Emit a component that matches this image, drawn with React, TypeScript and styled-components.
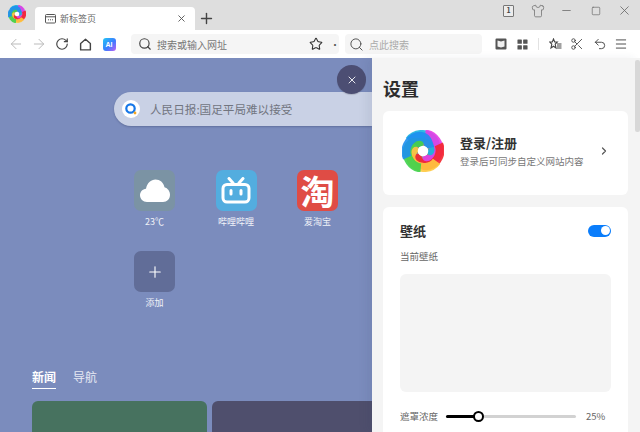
import React from "react";
import styled, { createGlobalStyle } from "styled-components";
import {
  ArrowLeft,
  ArrowRight,
  ChevronRight,
  Menu,
  Minus,
  Plus,
  RotateCw,
  Scissors,
  Search,
  Shirt,
  Square,
  Star,
  Undo2,
  X,
} from "lucide-react";

const GlobalStyle = createGlobalStyle`
  html, body {
    margin: 0;
    padding: 0;
    width: 640px;
    height: 432px;
    overflow: hidden;
    font-family: "Noto Sans CJK SC", "Liberation Sans", sans-serif;
  }
  * {
    box-sizing: border-box;
  }
`;

const Window = styled.div`
  width: 640px;
  height: 432px;
  display: flex;
  flex-direction: column;
  overflow: hidden;
`;

const TitleBar = styled.div`
  height: 30px;
  flex: none;
  display: flex;
  align-items: flex-end;
  background: #dedede;
  padding-left: 7px;
`;

const LogoSlot = styled.div`
  width: 28px;
  height: 30px;
  display: flex;
  align-items: center;
  padding: 0 0 2px 1px;
`;

const Tab = styled.div`
  width: 160px;
  height: 23px;
  display: flex;
  align-items: center;
  padding: 0 8px 0 10px;
  background: #fff;
  border-radius: 4px 4px 0 0;
  font-size: 9px;
  color: #666;
`;

const TabTitle = styled.span`
  flex: 1;
  margin-left: 4px;
`;

const NewTab = styled.div`
  width: 23px;
  height: 23px;
  display: flex;
  align-items: center;
  justify-content: center;
  color: #444;
`;

const WindowControls = styled.div`
  margin-left: auto;
  height: 30px;
  display: flex;
  align-items: flex-start;
  padding-right: 1px;
`;

const WindowButton = styled.div`
  width: 29px;
  height: 21px;
  display: flex;
  align-items: center;
  justify-content: center;
  color: #666;
`;

const CountBadge = styled.div`
  width: 11px;
  height: 12px;
  border: 1px solid #777;
  border-radius: 1px;
  background: #ececec;
  display: flex;
  align-items: center;
  justify-content: center;
  font-size: 7px;
  font-weight: 700;
  color: #444;
  line-height: 1;
`;

const Toolbar = styled.div`
  height: 28px;
  flex: none;
  display: flex;
  align-items: center;
  padding: 0 7px 0 4px;
  background: #fff;
`;

const ToolSlot = styled.div<{ $width?: number; $color?: string }>`
  width: ${(p) => p.$width ?? 23}px;
  height: 22px;
  flex: none;
  display: flex;
  align-items: center;
  justify-content: center;
  color: ${(p) => p.$color ?? "#555"};
`;

const Field = styled.div<{ $width: number; $inset: number }>`
  width: ${(p) => p.$width}px;
  height: 20px;
  flex: none;
  display: flex;
  align-items: center;
  padding-left: ${(p) => p.$inset}px;
  border-radius: 4px;
  background: #f5f5f5;
  font-size: 10px;
  color: #777;
`;

const AddressField = styled(Field)`
  margin-left: 10px;
`;

const EngineField = styled(Field)`
  margin-left: 6px;
  margin-right: 7px;
`;

const FieldText = styled.span<{ $muted?: boolean }>`
  flex: 1;
  margin-left: 5px;
  color: ${(p) => (p.$muted ? "#aaa" : "#777")};
`;

const AiBadge = styled.div`
  width: 13px;
  height: 13px;
  border-radius: 3px;
  background: linear-gradient(135deg, #22c7f5, #3b7cff 55%, #c060f5);
  color: #fff;
  font-size: 7px;
  font-weight: 700;
  line-height: 13px;
  text-align: center;
  font-family: "Liberation Sans", sans-serif;
`;

const Divider = styled.div`
  width: 1px;
  height: 12px;
  flex: none;
  margin: 0 5px;
  background: #e2e2e2;
`;

const Content = styled.div`
  flex: 1;
  min-height: 0;
  display: flex;
`;

const Main = styled.div`
  position: relative;
  flex: 1;
  min-width: 0;
  overflow: hidden;
  display: flex;
  flex-direction: column;
  background: #7b8cbd;
`;

const CloseButton = styled.div`
  position: absolute;
  top: 7px;
  right: 6px;
  width: 29px;
  height: 29px;
  border-radius: 50%;
  background: #4c4e73;
  color: #e8e8ee;
  display: flex;
  align-items: center;
  justify-content: center;
  box-shadow: 0 1px 1px rgba(0, 0, 0, 0.15);
`;

const Pill = styled.div`
  height: 34px;
  margin: 34px 0 0 114px;
  display: flex;
  align-items: center;
  padding-left: 8px;
  border-radius: 17px 0 0 17px;
  background: #c9d1e5;
  font-size: 11.6px;
  color: #71757f;
  box-shadow: 0 1px 2px rgba(50, 60, 100, 0.35);
`;

const PillText = styled.span`
  margin-left: 10px;
`;

const TileGrid = styled.div`
  margin: 44px 0 0 134px;
  display: grid;
  grid-template-columns: repeat(3, 41px);
  grid-auto-rows: 41px;
  column-gap: 40.5px;
  row-gap: 40px;
`;

const TileItem = styled.div`
  display: flex;
  flex-direction: column;
  align-items: center;
  height: 41px;
`;

const Tile = styled.div<{ $bg: string }>`
  width: 41px;
  height: 41px;
  flex: none;
  border-radius: 7px;
  background: ${(p) => p.$bg};
  display: flex;
  align-items: center;
  justify-content: center;
  color: #fff;
`;

const TileGlyph = styled.span`
  font-size: 34px;
  font-weight: 700;
  line-height: 1;
  color: #fff;
`;

const TileLabel = styled.div`
  margin-top: 4px;
  font-size: 9px;
  line-height: 13px;
  white-space: nowrap;
  color: #f0f2f8;
`;

const NewsTabs = styled.div`
  margin: 76px 0 0 32px;
  display: flex;
  gap: 17px;
`;

const NewsTab = styled.div<{ $active?: boolean }>`
  height: 21px;
  font-size: 12px;
  line-height: 18px;
  font-weight: ${(p) => (p.$active ? 700 : 400)};
  color: ${(p) => (p.$active ? "#fff" : "#e6e9f3")};
  border-bottom: ${(p) => (p.$active ? "1px solid #fff" : "none")};
`;

const NewsCards = styled.div`
  margin: 12px 0 0 32px;
  display: flex;
  gap: 5px;
  flex: 1;
`;

const NewsCard = styled.div<{ $bg: string; $width: number }>`
  width: ${(p) => p.$width}px;
  flex: none;
  border-radius: 6px 6px 0 0;
  background: ${(p) => p.$bg};
`;

const Settings = styled.aside`
  position: relative;
  width: 268px;
  flex: none;
  padding: 0 12px 0 11px;
  background: #f4f4f4;
  box-shadow: -6px 0 8px rgba(40, 50, 90, 0.07);
`;

const ScrollThumb = styled.div`
  position: absolute;
  top: 2px;
  right: 0;
  width: 5px;
  height: 72px;
  border-radius: 2px;
  background: #d8d8d8;
`;

const SettingsTitle = styled.h1`
  margin: 17px 0 10px;
  font-size: 18px;
  line-height: 26px;
  font-weight: 700;
  color: #2d2d2d;
`;

const Card = styled.section`
  background: #fff;
  border-radius: 6px;
`;

const AccountCard = styled(Card)`
  height: 84px;
  display: flex;
  align-items: center;
  padding: 0 18px 4px 19px;
  margin-bottom: 12px;
`;

const AccountText = styled.div`
  flex: 1;
  margin-left: 16px;
`;

const AccountName = styled.div`
  font-size: 13px;
  line-height: 18px;
  font-weight: 700;
  color: #333;
`;

const AccountHint = styled.div`
  margin-top: 2px;
  font-size: 9.5px;
  line-height: 14px;
  color: #777;
`;

const WallpaperCard = styled(Card)`
  height: 240px;
  padding: 13px 17px;
`;

const CardHeader = styled.div`
  display: flex;
  align-items: center;
  justify-content: space-between;
  height: 20px;
`;

const CardTitle = styled.div`
  font-size: 13px;
  font-weight: 700;
  color: #333;
`;

const Toggle = styled.div`
  width: 23px;
  height: 12px;
  margin-top: 1px;
  border-radius: 6px;
  background: #0a7dfb;
  display: flex;
  justify-content: flex-end;
  align-items: center;
  padding-right: 1.5px;
`;

const ToggleKnob = styled.div`
  width: 9px;
  height: 9px;
  border-radius: 50%;
  background: #fff;
`;

const SmallLabel = styled.div`
  font-size: 9.5px;
  line-height: 14px;
  color: #666;
  white-space: nowrap;
`;

const CurrentLabel = styled(SmallLabel)`
  margin-top: 9px;
`;

const Preview = styled.div`
  height: 118px;
  margin-top: 11px;
  border-radius: 6px;
  background: #f4f4f4;
`;

const SliderRow = styled.div`
  margin-top: 17px;
  display: flex;
  align-items: center;
`;

const SliderTrack = styled.div`
  position: relative;
  width: 130px;
  height: 3px;
  margin: 0 10px 0 8px;
  border-radius: 2px;
  background: #d2d2d2;
`;

const SliderFill = styled.div`
  height: 3px;
  border-radius: 2px;
  background: #000;
`;

const SliderThumb = styled.div`
  position: absolute;
  top: -4px;
  width: 11px;
  height: 11px;
  margin-left: -5.5px;
  border: 2px solid #000;
  border-radius: 50%;
  background: #fff;
`;

const bands = ["#19b4e0", "#e63ce6", "#f3262c", "#ffc93f", "#3ed24c", "#1e8ff0"];

const SwirlLogo: React.FC<{ size: number }> = ({ size }) => (
  <svg width={size} height={size} viewBox="0 0 40 40" fill="none">
    <circle cx="20" cy="20" r="9" stroke="#8f8f8f" strokeWidth="8" />
    {bands.map((color, i) => (
      <path
        key={color}
        d="M9 8C15 2 26 3 31 10C34 15 33 20 25 25"
        stroke={color}
        strokeWidth="8.500"
        opacity={0.9}
        transform={`rotate(${i * 60 - 10} 20 20)`}
      />
    ))}
    <circle cx="20" cy="20" r="5" fill="#fff" />
  </svg>
);

const CloudIcon = () => (
  <svg width="30" height="23" viewBox="0 0 30 23" fill="#fff">
    <path d="M7 23C3 23 0 20 0 16.300C0 12.800 2.600 10 6 9.700C7 4.200 11 0.500 15.500 0.500C20 0.500 23.500 3.600 24.500 8.200C27.800 9.200 30 12.300 30 15.800C30 20 27 23 23 23Z" />
  </svg>
);

const BilibiliIcon = () => (
  <svg width="30" height="27" viewBox="0 0 30 27" fill="none" stroke="#fff">
    <rect x="2" y="7.500" width="26" height="17.500" rx="4" strokeWidth="3" />
    <path d="M8 1.500L12 6M22 1.500L18 6" strokeWidth="3" strokeLinecap="round" />
    <path d="M10 13.500V17M20 13.500V17" strokeWidth="3" strokeLinecap="round" />
  </svg>
);

const TabPageIcon = () => (
  <svg width="11" height="11" viewBox="0 0 11 11" fill="none" stroke="#555">
    <rect x="0.500" y="1.500" width="10" height="8.500" rx="1" />
    <path d="M0.500 3.800H10.500" />
    <path d="M3 6.800H4M5 6.800H6M7 6.800H8" />
  </svg>
);

const HomeIcon = () => (
  <svg width="13" height="13" viewBox="0 0 12 12" fill="none" stroke="#444" strokeWidth="1.300">
    <path d="M1.500 11V5L6 1.200L10.500 5V11Z" strokeLinejoin="round" />
  </svg>
);

const BookIcon = () => (
  <svg width="12" height="12" viewBox="0 0 12 12" fill="#555">
    <path d="M1.500 0.500H10.500A1 1 0 0 1 11.500 1.500V10.500A1 1 0 0 1 10.500 11.500H1.500A1 1 0 0 1 0.500 10.500V1.500A1 1 0 0 1 1.500 0.500Z" />
    <path d="M2.500 2.500L6 3.500L9.500 2.500V8.500L6 9.500L2.500 8.500Z" fill="#f0f0f0" />
  </svg>
);

const GridIcon = () => (
  <svg width="11" height="11" viewBox="0 0 12 12" fill="#555">
    <rect x="0.500" y="0.500" width="4.800" height="4.800" rx="0.600" />
    <rect x="6.700" y="0.500" width="4.800" height="4.800" rx="0.600" />
    <rect x="0.500" y="6.700" width="4.800" height="4.800" rx="0.600" />
    <rect x="6.700" y="6.700" width="4.800" height="4.800" rx="0.600" />
  </svg>
);

const FavListIcon = () => (
  <svg width="13" height="12" viewBox="0 0 13 12" fill="none" stroke="#444" strokeWidth="1.100">
    <path d="M4.500 1L5.700 4H8.300L6.200 6.200L7 10L4.500 8.200L2 10L2.800 6.200L0.700 4H3.300Z" />
    <path d="M8 6H12.500M8 8H12.500M8 10H12.500" />
  </svg>
);

const SearchRingIcon = () => (
  <svg width="18" height="18" viewBox="0 0 18 18">
    <circle cx="9" cy="9" r="9" fill="#fff" />
    <circle cx="8.500" cy="8.500" r="4.200" fill="none" stroke="#1677e8" strokeWidth="2.200" />
    <circle cx="13" cy="13" r="1.400" fill="#f5a623" />
  </svg>
);

const App: React.FC = () => {
  const opacity = 25;

  return (
    <Window>
      <GlobalStyle />
      <TitleBar>
        <LogoSlot>
          <SwirlLogo size={18} />
        </LogoSlot>
        <Tab>
          <TabPageIcon />
          <TabTitle>新标签页</TabTitle>
          <X size={11} color="#555" />
        </Tab>
        <NewTab>
          <Plus size={17} strokeWidth={2} />
        </NewTab>
        <WindowControls>
          <WindowButton>
            <CountBadge>1</CountBadge>
          </WindowButton>
          <WindowButton>
            <Shirt size={14} strokeWidth={1.2} />
          </WindowButton>
          <WindowButton>
            <Minus size={13} strokeWidth={1.4} />
          </WindowButton>
          <WindowButton>
            <Square size={10} strokeWidth={1.6} />
          </WindowButton>
          <WindowButton>
            <X size={15} strokeWidth={1.3} />
          </WindowButton>
        </WindowControls>
      </TitleBar>

      <Toolbar>
        <ToolSlot $color="#bbb">
          <ArrowLeft size={16} strokeWidth={1.5} />
        </ToolSlot>
        <ToolSlot $color="#bbb">
          <ArrowRight size={16} strokeWidth={1.5} />
        </ToolSlot>
        <ToolSlot $color="#444">
          <RotateCw size={14} strokeWidth={2} />
        </ToolSlot>
        <ToolSlot $width={24}>
          <HomeIcon />
        </ToolSlot>
        <ToolSlot $width={24}>
          <AiBadge>AI</AiBadge>
        </ToolSlot>
        <AddressField $width={208} $inset={7}>
          <Search size={14} color="#444" strokeWidth={2} />
          <FieldText>搜索或输入网址</FieldText>
          <ToolSlot $width={30} $color="#333">
            <Star size={14} strokeWidth={1.8} />
          </ToolSlot>
          <ToolSlot $width={8}>·</ToolSlot>
        </AddressField>
        <EngineField $width={137} $inset={4}>
          <Search size={15} color="#555" strokeWidth={1.6} />
          <FieldText $muted>点此搜索</FieldText>
        </EngineField>
        <ToolSlot $width={23}>
          <BookIcon />
        </ToolSlot>
        <ToolSlot $width={21}>
          <GridIcon />
        </ToolSlot>
        <Divider />
        <ToolSlot $width={22}>
          <FavListIcon />
        </ToolSlot>
        <ToolSlot $width={22}>
          <Scissors size={14} strokeWidth={1.5} color="#444" />
        </ToolSlot>
        <ToolSlot $width={23}>
          <Undo2 size={14} strokeWidth={1.6} color="#444" />
        </ToolSlot>
        <ToolSlot $width={20}>
          <Menu size={14} strokeWidth={1.6} color="#444" />
        </ToolSlot>
      </Toolbar>

      <Content>
        <Main>
          <Pill>
            <SearchRingIcon />
            <PillText>人民日报:国足平局难以接受</PillText>
          </Pill>
          <TileGrid>
            <TileItem>
              <Tile $bg="#7b93a4">
                <CloudIcon />
              </Tile>
              <TileLabel>23℃</TileLabel>
            </TileItem>
            <TileItem>
              <Tile $bg="#53addf">
                <BilibiliIcon />
              </Tile>
              <TileLabel>哔哩哔哩</TileLabel>
            </TileItem>
            <TileItem>
              <Tile $bg="#df4c45">
                <TileGlyph>淘</TileGlyph>
              </Tile>
              <TileLabel>爱淘宝</TileLabel>
            </TileItem>
            <TileItem>
              <Tile $bg="#616d98">
                <Plus size={18} strokeWidth={1.5} />
              </Tile>
              <TileLabel>添加</TileLabel>
            </TileItem>
          </TileGrid>
          <NewsTabs>
            <NewsTab $active>新闻</NewsTab>
            <NewsTab>导航</NewsTab>
          </NewsTabs>
          <NewsCards>
            <NewsCard $bg="#47725f" $width={175} />
            <NewsCard $bg="#4f4f6d" $width={175} />
          </NewsCards>
          <CloseButton>
            <X size={12} strokeWidth={2} />
          </CloseButton>
        </Main>

        <Settings>
          <ScrollThumb />
          <SettingsTitle>设置</SettingsTitle>
          <AccountCard>
            <SwirlLogo size={42} />
            <AccountText>
              <AccountName>登录/注册</AccountName>
              <AccountHint>登录后可同步自定义网站内容</AccountHint>
            </AccountText>
            <ChevronRight size={12} color="#555" strokeWidth={2.4} />
          </AccountCard>
          <WallpaperCard>
            <CardHeader>
              <CardTitle>壁纸</CardTitle>
              <Toggle>
                <ToggleKnob />
              </Toggle>
            </CardHeader>
            <CurrentLabel>当前壁纸</CurrentLabel>
            <Preview />
            <SliderRow>
              <SmallLabel>遮罩浓度</SmallLabel>
              <SliderTrack>
                <SliderFill style={{ width: `${opacity}%` }} />
                <SliderThumb style={{ left: `${opacity}%` }} />
              </SliderTrack>
              <SmallLabel>{opacity}%</SmallLabel>
            </SliderRow>
          </WallpaperCard>
        </Settings>
      </Content>
    </Window>
  );
};

export default App;
